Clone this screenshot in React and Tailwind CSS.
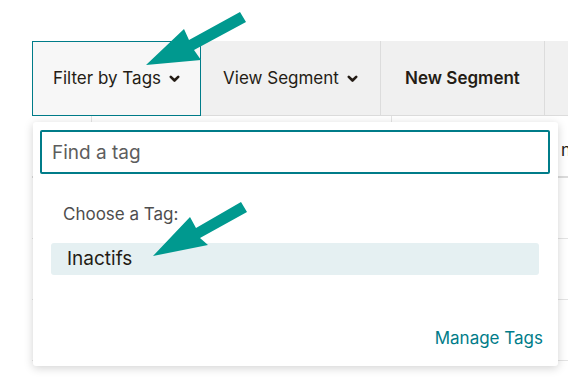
import { useState } from 'react';

const font = { fontFamily: 'Inter, "Liberation Sans", sans-serif' };

const Chevron = () => (
    <svg width="11" height="8" viewBox="0 0 11 8" className="ml-[8px]">
        <path d="M1.8 1.8 L5.5 5.5 L9.2 1.8" fill="none" stroke="#241c15" strokeWidth="2.6" strokeLinecap="round" strokeLinejoin="round" />
    </svg>
);

const Arrow = ({ tail, tip, left, right, neck }) => (
    <polygon
        points={`${tip[0]},${tip[1]} ${left[0]},${left[1]} ${neck[0][0]},${neck[0][1]} ${tail[0][0]},${tail[0][1]} ${tail[1][0]},${tail[1][1]} ${neck[1][0]},${neck[1][1]} ${right[0]},${right[1]}`}
        fill="#00998f"
    />
);

const App = () => {
    const [query, setQuery] = useState('');

    return (
        <div className="relative w-[568px] h-[379px] overflow-hidden bg-white" style={font}>
            <div className="pt-[41px] pl-[32px]">
                {/* Toolbar */}
                <div className="flex h-[75px] text-[#241c15]">
                    <button className="flex items-center justify-center w-[169px] border border-[#007c89] bg-[#f7f7f7] text-[17px] pt-[1px]">
                        Filter by Tags
                        <Chevron />
                    </button>
                    <button className="flex items-center justify-center w-[180px] bg-[#f0f0f0] border-r border-[#dcdcdc] border-b text-[17px] pt-[1px]">
                        View Segment
                        <Chevron />
                    </button>
                    <button className="flex items-center justify-center w-[164px] bg-[#f0f0f0] border-r border-b border-[#dcdcdc] text-[17px] font-semibold pt-[1px]">
                        New Segment
                    </button>
                    <div className="flex-1 bg-[#f0f0f0] border-b border-[#dcdcdc]"></div>
                </div>

                {/* Table behind dropdown */}
                <div className="text-[#241c15] text-[17px]">
                    <div className="flex h-[62px] border-b-2 border-[#dcdcdc]">
                        <div className="w-[60px] border-r border-[#e4e4e4]"></div>
                        <div className="w-[300px] border-r border-[#e4e4e4]"></div>
                        <div className="flex-1 flex items-start pt-[22px] overflow-hidden whitespace-nowrap">
                            <span className="pl-[169px]">name</span>
                        </div>
                    </div>
                    {[0, 1, 2].map((i) => (
                        <div key={i} className="flex h-[61px] border-b border-[#e4e4e4]">
                            <div className="w-[60px] border-r border-[#e4e4e4] flex justify-center pt-[16px]">
                                <div className="w-[30px] h-[30px] border border-[#c8c8c8] rounded-sm"></div>
                            </div>
                            <div className="w-[300px] border-r border-[#e4e4e4]"></div>
                            <div className="flex-1"></div>
                        </div>
                    ))}
                </div>
            </div>

            {/* Dropdown */}
            <div className="absolute left-[33px] top-[122px] w-[525px] h-[244px] bg-white rounded-[3px] shadow-[0_2px_10px_rgba(0,0,0,0.18)] px-[7px] pt-[8px]">
                <input
                    value={query}
                    onChange={(e) => setQuery(e.target.value)}
                    placeholder="Find a tag"
                    className="w-[510px] h-[44px] border-2 border-[#007c89] rounded-[2px] px-[10px] text-[19px] text-[#241c15] placeholder:text-[#5d5d5d] outline-none"
                />
                <p className="mt-[30px] pl-[23px] text-[17px] text-[#4e4e4e] leading-[20px]">Choose a Tag:</p>
                <div className="mt-[19px] ml-[11px] w-[488px] h-[32px] rounded-[3px] bg-[#e5f0f2] flex items-center pl-[16px] pt-[1px] text-[19px] text-[#241c15]">
                    Inactifs
                </div>
                <div className="mt-[51px] pr-[8px] text-right text-[17px] text-[#007c89]">Manage Tags</div>
            </div>

            {/* Annotation arrows */}
            <svg className="absolute inset-0 pointer-events-none" width="568" height="379">
                <Arrow
                    tip={[146, 65]}
                    left={[184, 29]}
                    right={[201, 60]}
                    neck={[[189, 40], [194, 50]]}
                    tail={[[240, 12], [246, 22]]}
                />
                <Arrow
                    tip={[153, 256]}
                    left={[190, 217]}
                    right={[208, 245]}
                    neck={[[196, 228], [200, 238]]}
                    tail={[[241, 202], [247, 212]]}
                />
            </svg>
        </div>
    );
};

export default App;
